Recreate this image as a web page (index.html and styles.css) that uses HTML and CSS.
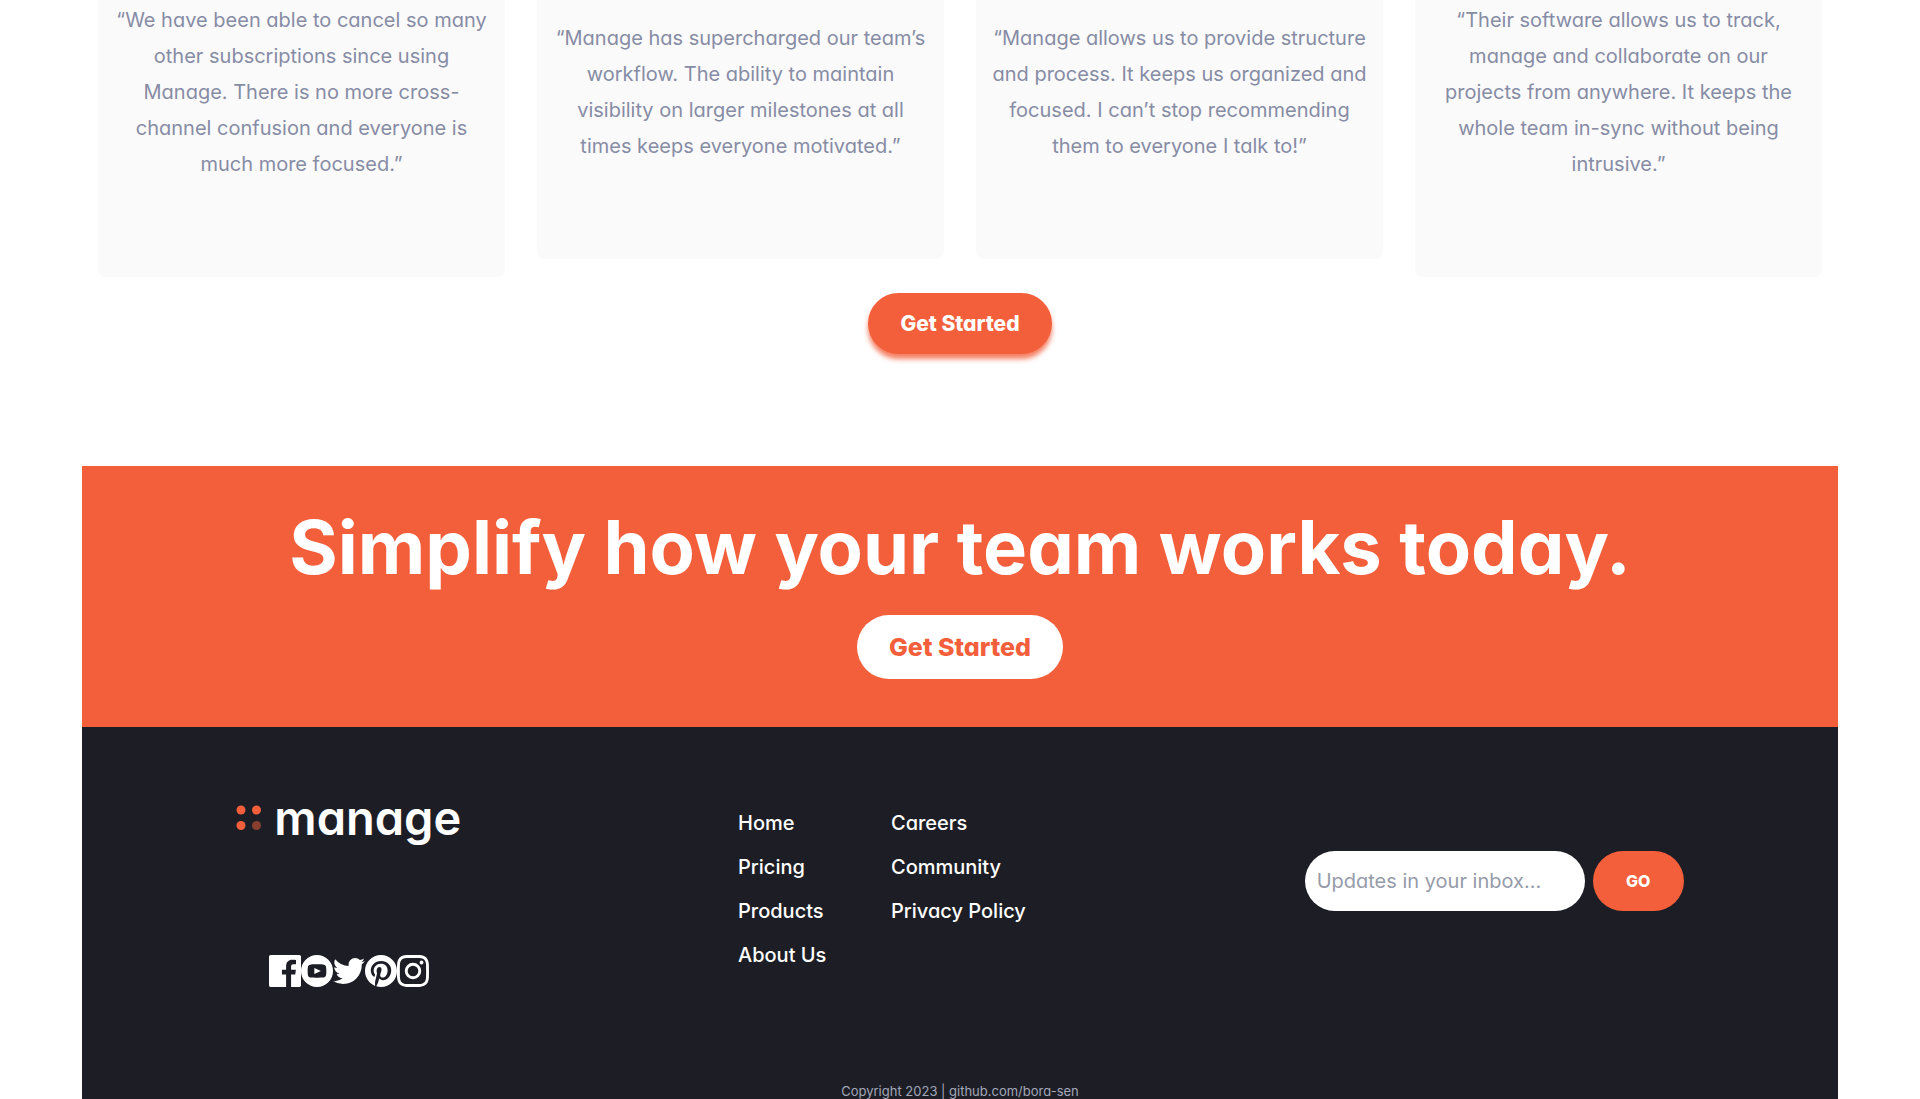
FILE: index.html
```html
<!DOCTYPE html>
<html lang="en">
<head>
  <meta charset="utf-8">
  <meta name="viewport" content="width=device-width, initial-scale=1">
  <title>Manage</title>
  <link rel="stylesheet" href="styles.css">
</head>
<body>
  <div class="page">
    <main>
      <section class="testimonials">
        <div class="cards">
          <blockquote class="card"><p>“We have been able to cancel so many other subscriptions since using Manage. There is no more cross-channel confusion and everyone is much more focused.”</p></blockquote>
          <blockquote class="card"><p>“Manage has supercharged our team’s workflow. The ability to maintain visibility on larger milestones at all times keeps everyone motivated.”</p></blockquote>
          <blockquote class="card"><p>“Manage allows us to provide structure and process. It keeps us organized and focused. I can’t stop recommending them to everyone I talk to!”</p></blockquote>
          <blockquote class="card"><p>“Their software allows us to track, manage and collaborate on our projects from anywhere. It keeps the whole team in-sync without being intrusive.”</p></blockquote>
        </div>
        <button class="btn btn-primary" type="button">Get Started</button>
      </section>

      <section class="cta">
        <h2 class="cta-title">Simplify how your team works today.</h2>
        <button class="btn btn-light" type="button">Get Started</button>
      </section>
    </main>

    <footer class="footer">
      <div class="footer-row">
        <div class="brand">
          <a class="logo" href="#">
            <svg class="logo-dots" viewBox="0 0 26 26" aria-hidden="true">
              <circle cx="5" cy="5" r="4.5"/><circle cx="20.5" cy="5" r="4.5"/>
              <circle cx="5" cy="20.5" r="4.5"/><circle cx="20.5" cy="20.5" r="4.5" opacity=".5"/>
            </svg>
            <span class="logo-text">manage</span>
          </a>
          <div class="social">
            <a href="#" aria-label="Facebook"><svg viewBox="0 0 24 24"><path d="M22.675 0H1.325C.593 0 0 .593 0 1.325v21.351C0 23.407.593 24 1.325 24H12.82v-9.294H9.692v-3.622h3.128V8.413c0-3.1 1.893-4.788 4.659-4.788 1.325 0 2.463.099 2.795.143v3.24l-1.918.001c-1.504 0-1.795.715-1.795 1.763v2.313h3.587l-.467 3.622h-3.12V24h6.116c.73 0 1.323-.593 1.323-1.325V1.325C24 .593 23.407 0 22.675 0z"/></svg></a>
            <a href="#" aria-label="YouTube"><svg viewBox="0 0 24 24"><path fill-rule="evenodd" d="M12 0a12 12 0 1 0 0 24 12 12 0 0 0 0-24zm4.44 16.9c-2.1.14-6.78.14-8.88 0C5.28 16.74 5.02 15.63 5 12c.02-3.64.28-4.74 2.56-4.9 2.1-.14 6.78-.14 8.88 0C18.72 7.26 18.98 8.37 19 12c-.02 3.64-.28 4.74-2.56 4.9zM10 9.66 14.92 12 10 14.34V9.66z"/></svg></a>
            <a href="#" aria-label="Twitter"><svg viewBox="0 0 24 24"><path d="M24 4.557a9.83 9.83 0 0 1-2.828.775 4.932 4.932 0 0 0 2.165-2.724 9.864 9.864 0 0 1-3.127 1.195 4.916 4.916 0 0 0-3.594-1.555c-3.179 0-5.515 2.966-4.797 6.045A13.978 13.978 0 0 1 1.671 3.149a4.93 4.93 0 0 0 1.523 6.574 4.903 4.903 0 0 1-2.229-.616c-.054 2.281 1.581 4.415 3.949 4.89a4.935 4.935 0 0 1-2.224.084 4.928 4.928 0 0 0 4.6 3.419A9.9 9.9 0 0 1 0 19.54a13.94 13.94 0 0 0 7.548 2.212c9.142 0 14.307-7.721 13.995-14.646A10.025 10.025 0 0 0 24 4.557z"/></svg></a>
            <a href="#" aria-label="Pinterest"><svg viewBox="0 0 24 24"><path d="M12 0C5.373 0 0 5.372 0 12c0 5.084 3.163 9.426 7.627 11.174-.105-.949-.2-2.405.042-3.441.218-.937 1.407-5.965 1.407-5.965s-.359-.719-.359-1.782c0-1.668.967-2.914 2.171-2.914 1.023 0 1.518.769 1.518 1.69 0 1.029-.655 2.568-.994 3.995-.283 1.194.599 2.169 1.777 2.169 2.133 0 3.772-2.249 3.772-5.495 0-2.873-2.064-4.882-5.012-4.882-3.414 0-5.418 2.561-5.418 5.207 0 1.031.397 2.138.893 2.738a.36.36 0 0 1 .083.345l-.333 1.36c-.053.22-.174.267-.402.161-1.499-.698-2.436-2.889-2.436-4.649 0-3.785 2.75-7.262 7.929-7.262 4.163 0 7.398 2.967 7.398 6.931 0 4.136-2.607 7.464-6.227 7.464-1.216 0-2.359-.631-2.75-1.378l-.748 2.853c-.271 1.043-1.002 2.35-1.492 3.146C9.57 23.812 10.763 24 12 24c6.627 0 12-5.373 12-12 0-6.628-5.373-12-12-12z"/></svg></a>
            <a href="#" aria-label="Instagram"><svg viewBox="0 0 24 24"><path d="M12 2.163c3.204 0 3.584.012 4.85.07 3.252.148 4.771 1.691 4.919 4.919.058 1.265.069 1.645.069 4.849 0 3.205-.012 3.584-.069 4.849-.149 3.225-1.664 4.771-4.919 4.919-1.266.058-1.644.07-4.85.07-3.204 0-3.584-.012-4.849-.07-3.26-.149-4.771-1.699-4.919-4.92-.058-1.265-.07-1.644-.07-4.849 0-3.204.013-3.583.07-4.849.149-3.227 1.664-4.771 4.919-4.919 1.266-.057 1.645-.069 4.849-.069zM12 0C8.741 0 8.333.014 7.053.072 2.695.272.273 2.69.073 7.052.014 8.333 0 8.741 0 12c0 3.259.014 3.668.072 4.948.2 4.358 2.618 6.78 6.98 6.98C8.333 23.986 8.741 24 12 24c3.259 0 3.668-.014 4.948-.072 4.354-.2 6.782-2.618 6.979-6.98.059-1.28.073-1.689.073-4.948 0-3.259-.014-3.667-.072-4.947-.196-4.354-2.617-6.78-6.979-6.98C15.668.014 15.259 0 12 0zm0 5.838a6.162 6.162 0 1 0 0 12.324 6.162 6.162 0 0 0 0-12.324zM12 16a4 4 0 1 1 0-8 4 4 0 0 1 0 8zm6.406-11.845a1.44 1.44 0 1 0 0 2.881 1.44 1.44 0 0 0 0-2.881z"/></svg></a>
          </div>
        </div>

        <nav class="links" aria-label="Footer">
          <ul>
            <li><a href="#">Home</a></li>
            <li><a href="#">Pricing</a></li>
            <li><a href="#">Products</a></li>
            <li><a href="#">About Us</a></li>
          </ul>
          <ul>
            <li><a href="#">Careers</a></li>
            <li><a href="#">Community</a></li>
            <li><a href="#">Privacy Policy</a></li>
          </ul>
        </nav>

        <form class="newsletter">
          <input class="newsletter-input" type="email" placeholder="Updates in your inbox..." aria-label="Updates in your inbox">
          <button class="btn btn-go" type="submit">GO</button>
        </form>
      </div>
      <p class="copyright">Copyright 2023 | github.com/bora-sen</p>
    </footer>
  </div>
</body>
</html>
```

FILE: styles.css
```css
:root {
  --orange: #f35f3b;
  --dark: #1d1e25;
  --muted: #878ca5;
  --card: #fafafa;
}

* {
  box-sizing: border-box;
  margin: 0;
  padding: 0;
}

body {
  background: #fff;
  font-family: Inter, "Liberation Sans", sans-serif;
  font-feature-settings: "cv11";
  font-size: 20px;
  overflow-x: hidden;
}

a {
  color: inherit;
  text-decoration: none;
}

.page {
  max-width: 1756px;
  margin: 0 auto;
}

.testimonials {
  display: flex;
  flex-direction: column;
  align-items: center;
  gap: 16px;
  padding: 0 16px 112px;
}

/* The tops of the cards run up past the window edge */
.cards {
  display: grid;
  grid-template-columns: repeat(4, 1fr);
  align-items: center;
  gap: 32px;
  width: 100%;
  margin-top: -200px;
}

.card {
  padding: 202px 16px 95px;
  border-radius: 8px;
  background: var(--card);
  color: var(--muted);
  line-height: 36px;
  text-align: center;
}

.btn {
  border: 0;
  border-radius: 32px;
  font: inherit;
  font-feature-settings: inherit;
  font-weight: 800;
  cursor: pointer;
}

.btn-primary {
  height: 61px;
  padding: 0 32px;
  background: var(--orange);
  box-shadow: 0 5px 5px rgba(243, 96, 60, 0.8);
  color: #fff;
  font-size: 21px;
}

.cta {
  display: flex;
  flex-direction: column;
  align-items: center;
  gap: 19px;
  padding: 32px 32px 48px;
  background: var(--orange);
  color: #fff;
}

.cta-title {
  font-size: 74px;
  line-height: 98px;
  text-align: center;
}

.btn-light {
  height: 64px;
  padding: 0 32px;
  background: #fff;
  color: var(--orange);
  font-size: 25px;
}

.footer {
  padding: 74px 16px 0;
  background: var(--dark);
  color: #fff;
}

.footer-row {
  display: flex;
  justify-content: space-around;
  align-items: flex-start;
}

.brand {
  display: flex;
  flex-direction: column;
  align-items: center;
  gap: 120px;
}

.logo {
  display: flex;
  align-items: center;
  gap: 12px;
  width: 225px;
}

.logo-dots {
  flex: none;
  width: 26px;
  height: 26px;
  fill: var(--orange);
}

.logo-text {
  font-size: 47px;
  font-weight: 600;
  line-height: 34px;
}

.social {
  display: flex;
}

.social svg {
  display: block;
  width: 32px;
  height: 32px;
  fill: #fff;
}

.links {
  display: grid;
  grid-template-columns: 153px 137px;
  font-weight: 500;
  line-height: 44px;
  white-space: nowrap;
}

.links ul {
  list-style: none;
}

.newsletter {
  display: flex;
  gap: 8px;
  margin-top: 50px;
}

.newsletter-input {
  width: 280px;
  height: 60px;
  padding: 0 12px;
  border: 0;
  border-radius: 32px;
  background: #fff;
  color: var(--dark);
  font: inherit;
  font-feature-settings: inherit;
}

.newsletter-input::placeholder {
  color: #969baa;
  opacity: 1;
}

.btn-go {
  width: 91px;
  background: var(--orange);
  color: #fff;
  font-size: 16px;
}

.copyright {
  margin-top: 96px;
  color: #a3a7ba;
  font-size: 13px;
  line-height: 16px;
  text-align: center;
}
```
